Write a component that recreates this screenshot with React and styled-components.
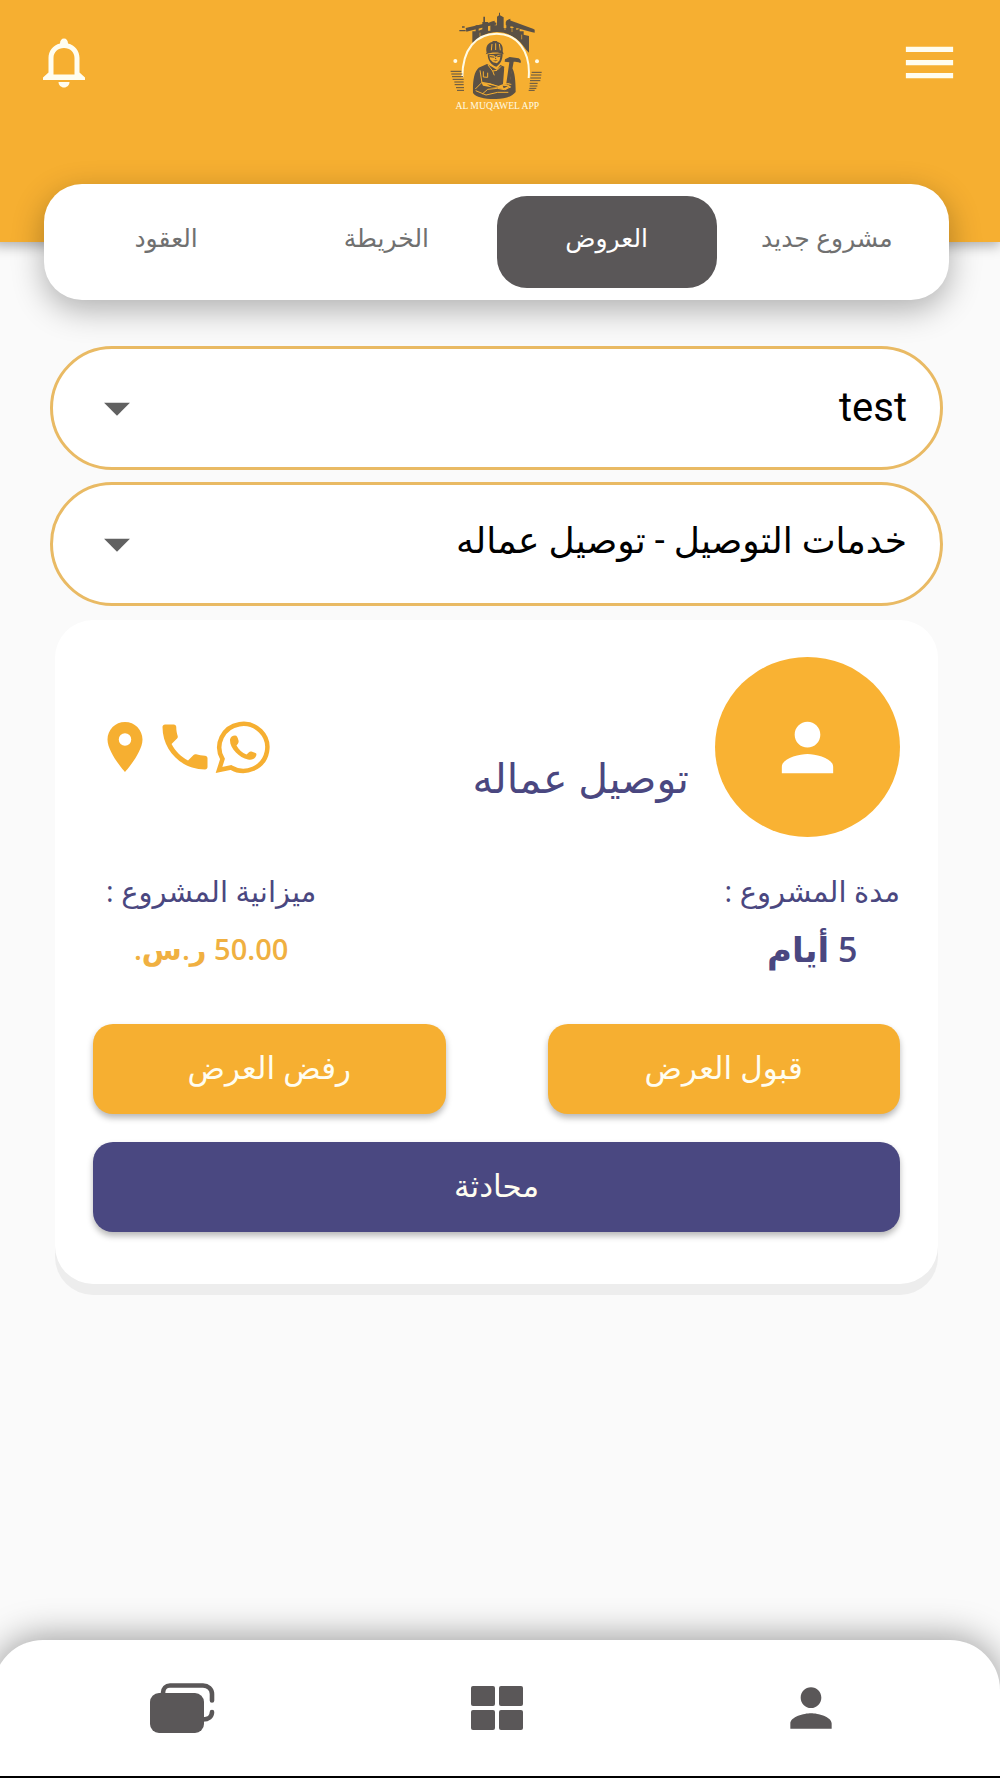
import React, { useState } from "react";
import styled, { createGlobalStyle } from "styled-components";
import {
  MdArrowDropDown,
  MdLocationOn,
  MdMenu,
  MdPerson,
  MdPhone,
} from "react-icons/md";

const tabs = ["مشروع جديد", "العروض", "الخريطة", "العقود"];

const App = () => {
  const [active, setActive] = useState(1);

  return (
    <Page dir="rtl">
      <GlobalStyle />
      <Header>
        <IconButton aria-label="القائمة">
          <MdMenu size={63} />
        </IconButton>
        <Logo />
        <IconButton aria-label="الإشعارات">
          <BellIcon />
        </IconButton>
      </Header>

      <Tabs>
        {tabs.map((tab, i) => (
          <Tab key={tab} $active={i === active} onClick={() => setActive(i)}>
            {tab}
          </Tab>
        ))}
      </Tabs>

      <Filters>
        <SelectBox>
          <Select aria-label="المشروع" defaultValue="test">
            <option value="test">test</option>
          </Select>
          <MdArrowDropDown size={62} />
        </SelectBox>
        <SelectBox>
          <Select aria-label="الخدمة" defaultValue="delivery" $arabic>
            <option value="delivery">خدمات التوصيل - توصيل عماله</option>
          </Select>
          <MdArrowDropDown size={62} />
        </SelectBox>
      </Filters>

      <Card>
        <Top>
          <Avatar>
            <MdPerson size={77} />
          </Avatar>
          <Name>توصيل عماله</Name>
          <Contacts>
            <ContactLink href="#whatsapp" aria-label="واتساب">
              <WhatsappIcon />
            </ContactLink>
            <ContactLink href="#phone" aria-label="اتصال">
              <MdPhone size={60} />
            </ContactLink>
            <ContactLink href="#location" aria-label="الموقع">
              <MdLocationOn size={60} />
            </ContactLink>
          </Contacts>
        </Top>

        <Details>
          <Detail>
            <Label>مدة المشروع :</Label>
            <Days>5 أيام</Days>
          </Detail>
          <Detail>
            <Label>ميزانية المشروع :</Label>
            <Price>50.00 ر.س.</Price>
          </Detail>
        </Details>

        <Actions>
          <Button>قبول العرض</Button>
          <Button>رفض العرض</Button>
        </Actions>
        <Button $dark>محادثة</Button>
      </Card>

      <Nav>
        <NavLink href="#profile" aria-label="حسابي">
          <MdPerson size={62} />
        </NavLink>
        <NavLink href="#home" aria-label="الرئيسية">
          <GridIcon />
        </NavLink>
        <NavLink href="#projects" aria-label="المشاريع">
          <CardsIcon />
        </NavLink>
      </Nav>
    </Page>
  );
};

export default App;

const BellIcon = () => (
  <svg width="42" height="50" viewBox="0 0 42 50" fill="currentColor">
    <path
      fillRule="evenodd"
      d="M17 5.500C17 2.500 18.500 .500 21 .500S25 2.500 25 5.500C32 7 36.500 13 36.500 20V34.500L42 39.500V42H0V39.500L5.500 34.500V20C5.500 13 10 7 17 5.500ZM10.500 36.500H31.500V20C31.500 14 27 10 21 10S10.500 14 10.500 20Z"
    />
    <path d="M15.500 44H26.500C26.500 47 24 49.500 21 49.500S15.500 47 15.500 44Z" />
  </svg>
);

const WhatsappIcon = () => (
  <svg width="56" height="54" viewBox="0 0 56 54">
    <path
      d="M4 50L7.500 39A24 23.500 0 1 1 16 47.500Z"
      fill="none"
      stroke="currentColor"
      strokeWidth="4.500"
    />
    <path
      fill="currentColor"
      d="M15 19.500C15.500 17 17.500 15.500 20 15.500C22 15.500 22.500 17 23.500 20.500C24 22.500 23 23.500 21.500 25.500C24 30 27 32.500 31.500 34.500C33.500 32.500 34.500 31 36.500 31.500L40.500 33C42 33.500 41.500 35.500 40.500 37C39 39.500 36 40.200 33 39.500C24 37.500 14.500 28 15 19.500Z"
    />
  </svg>
);

const GridIcon = () => (
  <svg width="52" height="44" viewBox="0 0 52 44" fill="currentColor">
    <rect width="24" height="20" rx="2" />
    <rect x="28" width="24" height="20" rx="2" />
    <rect y="24" width="24" height="20" rx="2" />
    <rect x="28" y="24" width="24" height="20" rx="2" />
  </svg>
);

const CardsIcon = () => (
  <svg width="65" height="50" viewBox="0 0 65 50">
    <rect y="10" width="54" height="40" rx="9" fill="currentColor" />
    <path
      d="M13 12V10C13 5.500 16 2.500 20 2.500H53C58 2.500 62 6 62 11V17.500M62 29C62 33.500 58.500 36.500 53 36.500"
      fill="none"
      stroke="currentColor"
      strokeWidth="4.600"
      strokeLinecap="round"
    />
  </svg>
);

const Logo = () => (
  <svg width="100" height="104" viewBox="52 30 300 312">
    {/* skyline and cranes */}
    <g fill="#5b5145">
      <path d="M128 126V94H138V76H147V92L158 88V66H161V50H166V66H175V92H182V66L195 62V76H202V50L208 46V38H211V46L222 52V84H230V62L242 56V84H252V74L260 68V90L270 86V94H282V104L298 108V158L290 150C270 118 240 97 202 96C174 97 150 108 130 132Z" />
      <path d="M108 84L188 65L200 68V74L190 75L110 95ZM97 79H105V83H97ZM89 90H108V94H89Z" />
      <path d="M228 66L236 59L310 86L315 89V98L308 97L228 75Z" />
    </g>
    <path
      d="M151 98V110M178 78V92M226 60V90M247 78V96M276 104V118"
      stroke="#f6af31"
      strokeWidth="2"
      fill="none"
    />
    <path
      d="M98 232C98 146 140 101 201 101S304 154 297 234"
      fill="none"
      stroke="#fffbe5"
      strokeWidth="6"
    />
    <circle cx="77" cy="183" r="6" fill="#fffbe5" />
    <circle cx="322" cy="184" r="6" fill="#fffbe5" />
    {/* side lines */}
    <path
      stroke="#5b5145"
      strokeWidth="3"
      d="M63 214H95M65 222H98M67 230H100M69 238H102M74 246H102M75 254H102M79 263H103M82 271H103M306 217H336M304 225H335M302 234H334M301 242H332M300 250H324M300 258H323M299 265H320M297 271H315"
    />
    {/* worker */}
    <g fill="#5b5145">
      <path d="M171 158C167 142 173 130 187 126L190 123H201L204 126C216 129 221 141 219 154L222 163C203 155 187 157 168 163Z" />
      <path d="M174 163L219 160C219 180 212 192 200 200C185 196 174 182 174 163Z" />
      <path d="M172 192L188 201L202 210L212 195L224 200L220 252H239L247 205C255 211 258 246 258 276C246 291 222 298 194 297C164 297 138 291 130 279C129 246 132 216 147 203Z" />
      <path d="M226 178L240 171L267 175C274 179 275 187 272 189C264 185 258 186 252 185L240 250H230L239 187L225 185Z" />
    </g>
    <path
      fill="#f6af31"
      d="M179 165L193 166L198 171L205 165L213 164L210 181L202 190L190 187L181 178Z"
    />
    <path
      fill="#5b5145"
      d="M180 168L194 170V173L182 172ZM203 168L213 166V170L203 172ZM189 182L205 180L198 184ZM197 172L201 178L196 177Z"
    />
    <g fill="none" stroke="#f6af31" strokeWidth="3">
      <path d="M187 132L185 151M198 130V150M209 132L212 151" />
      <path d="M175 195L189 213L202 211L214 199M189 213L194 226M151 211L157 249M225 203L229 219M233 252L245 253M161 214V231L174 232V218" />
      <path d="M137 267L157 247L179 251L209 260L228 253L243 261L224 269L203 265L174 268L158 282M138 272L169 285L204 277L236 277" />
    </g>
    <path
      fill="#f6af31"
      d="M156 249L180 250L204 259L221 252L241 258L229 269L207 265L181 261L160 257Z"
    />
    <path
      fill="#5b5145"
      d="M171 253L193 257L207 262L188 262ZM219 257L235 259L222 265Z"
    />
    <text
      x="203"
      y="327"
      textAnchor="middle"
      fontFamily="Liberation Serif, serif"
      fontSize="29"
      fill="#fffbe5"
    >
      AL MUQAWEL APP
    </text>
  </svg>
);

const GlobalStyle = createGlobalStyle`
  * {
    box-sizing: border-box;
  }
  body {
    margin: 0;
    background-color: #fafafa;
    overflow-x: hidden;
  }
  button, select {
    font: inherit;
    border: none;
    cursor: pointer;
  }
`;

const Page = styled.div`
  display: flex;
  flex-direction: column;
  min-height: 100vh;
  margin-left: -7px;
  font-family: "Open Sans", "DejaVu Sans", sans-serif;
  overflow: hidden;
  border-bottom: 2px solid #000;
`;

const Header = styled.header`
  display: flex;
  justify-content: space-between;
  align-items: flex-start;
  height: 242px;
  padding: 10px 40px 0;
  background-color: #f6af31;
  box-shadow: 0 4px 12px rgba(0, 0, 0, 0.3);
`;

const IconButton = styled.button`
  display: flex;
  justify-content: center;
  align-items: center;
  width: 62px;
  height: 105px;
  padding: 0;
  background: none;
  color: #fffdf0;
  svg {
    flex-shrink: 0;
  }
`;

const Tabs = styled.nav`
  position: relative;
  display: grid;
  grid-template-columns: repeat(4, 1fr);
  margin: -58px 51px 0;
  padding: 12px;
  border-radius: 38px;
  background-color: #fff;
  box-shadow: 0 10px 32px rgba(0, 0, 0, 0.3);
`;

const Tab = styled.button`
  height: 92px;
  padding: 0 0 10px;
  border-radius: 30px;
  font-size: 25px;
  background-color: ${({ $active }) => ($active ? "#5a5758" : "transparent")};
  color: ${({ $active }) => ($active ? "#fff" : "#707070")};
`;

const Filters = styled.div`
  display: flex;
  flex-direction: column;
  gap: 12px;
  margin: 46px 57px 0;
`;

const SelectBox = styled.div`
  display: grid;
  align-items: center;
  color: #616161;
  > * {
    grid-area: 1 / 1;
  }
  svg {
    justify-self: end;
    margin-left: 36px;
    pointer-events: none;
  }
`;

const Select = styled.select`
  appearance: none;
  width: 100%;
  height: 124px;
  padding: ${({ $arabic }) => ($arabic ? "0 33px 6px" : "0 33px 2px")};
  border: 3px solid #e9ba64;
  border-radius: 62px;
  background-color: #fff;
  color: #000;
  font-family: Roboto, "DejaVu Sans", sans-serif;
  font-size: ${({ $arabic }) => ($arabic ? "36px" : "40px")};
`;

const Card = styled.section`
  display: flex;
  flex-direction: column;
  margin: 14px 62px 32px;
  padding: 37px 38px 52px;
  border-radius: 38px;
  background-color: #fff;
  box-shadow: 0 11px 0 #ededed;
`;

const Top = styled.div`
  display: flex;
  align-items: center;
`;

const Avatar = styled.div`
  display: flex;
  justify-content: center;
  align-items: center;
  width: 185px;
  height: 180px;
  border-radius: 50%;
  background-color: #f9b233;
  color: #fff;
`;

const Name = styled.h2`
  margin: 60px 26px 0 0;
  color: #4a4780;
  font-size: 41px;
  font-weight: 400;
  line-height: 52px;
`;

const Contacts = styled.div`
  display: flex;
  align-items: center;
  margin-right: auto;
  padding-left: 2px;
  color: #f6af31;
`;

const ContactLink = styled.a`
  display: flex;
  color: inherit;
`;

const Details = styled.div`
  display: flex;
  justify-content: space-between;
  margin-top: 30px;
  padding-left: 13px;
`;

const Detail = styled.div`
  display: flex;
  flex-direction: column;
  align-items: center;
  gap: 10px;
`;

const Label = styled.span`
  color: #4a4780;
  font-size: 29px;
  line-height: 48px;
`;

const Days = styled.strong`
  color: #4a4780;
  font-size: 34px;
  font-weight: 600;
  line-height: 48px;
`;

const Price = styled.strong`
  color: #f0b041;
  font-size: 29px;
  font-weight: 600;
  line-height: 48px;
`;

const Actions = styled.div`
  display: grid;
  grid-template-columns: 1fr 1fr;
  gap: 102px;
  margin: 51px 0 28px;
`;

const Button = styled.button`
  height: 90px;
  padding: 0 0 4px;
  border-radius: 20px;
  background-color: ${({ $dark }) => ($dark ? "#4a4881" : "#f6af31")};
  color: #fffdf0;
  font-size: 31px;
  box-shadow: 0 4px 6px rgba(0, 0, 0, 0.28);
`;

const Nav = styled.nav`
  display: grid;
  grid-template-columns: repeat(3, 1fr);
  align-items: center;
  justify-items: center;
  height: 136px;
  margin-top: auto;
  padding: 0 32px;
  border-radius: 50px 50px 0 0;
  background-color: #fff;
  color: #5a5758;
  box-shadow: 0 -2px 36px rgba(0, 0, 0, 0.4);
`;

const NavLink = styled.a`
  display: flex;
  color: inherit;
`;
